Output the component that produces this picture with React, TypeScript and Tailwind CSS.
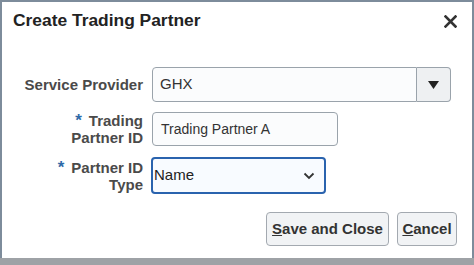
import React from "react";

const font = { fontFamily: '"Liberation Sans", Arial, sans-serif' };

function Label({ lines, required }: { lines: string[]; required?: boolean }) {
  return (
    <div className="w-[141px] shrink-0 text-right text-[15px] font-bold leading-[17px] text-[#4a4a4a]">
      {lines.map((l, i) => (
        <div key={i}>
          {i === 0 && required ? <span className="text-[#2f6aa8] mr-[7px] text-[17px]">*</span> : null}
          {l}
        </div>
      ))}
    </div>
  );
}

export default function App() {
  return (
    <div className="w-[474px] h-[265px] bg-[#9ea2a6] overflow-hidden" style={font}>
      <div className="h-[258px] bg-white border-l-2 border-r-2 border-t-2 border-[#7d8c9b] flex flex-col">
        <div className="flex items-start justify-between pl-[11px] pr-[14px] pt-[8px]">
          <div className="text-[17.4px] font-bold text-[#222] leading-[20px]">Create Trading Partner</div>
          <svg width="13" height="13" viewBox="0 0 13 13" className="mt-[5px] mr-[1px]">
            <path d="M1.5 1.5 L11.5 11.5 M11.5 1.5 L1.5 11.5" stroke="#333" strokeWidth="2.6" strokeLinecap="square" />
          </svg>
        </div>

        <div className="flex flex-col mt-[37px]">
          <div className="flex items-center h-[35px]">
            <Label lines={["Service Provider"]} />
            <div className="ml-[9px] flex h-[35px]">
              <div className="w-[265px] h-full border border-[#9aa3ab] rounded-l-[4px] bg-[#fbfcfd] flex items-center pl-[7px] text-[15px] text-[#333]">
                GHX
              </div>
              <div className="w-[34px] h-full border border-l-0 border-[#9aa3ab] rounded-r-[4px] bg-[#eef0f2] flex items-center justify-center">
                <svg width="11" height="8" viewBox="0 0 11 8">
                  <path d="M0 0 L11 0 L5.5 8 Z" fill="#222" />
                </svg>
              </div>
            </div>
          </div>

          <div className="flex items-center h-[34px] mt-[10px]">
            <Label lines={["Trading", "Partner ID"]} required />
            <div className="ml-[9px] w-[186px] h-[34px] border border-[#9aa3ab] rounded-[4px] bg-[#fbfcfd] flex items-center pl-[8px] text-[14px] text-[#333]">
              Trading Partner A
            </div>
          </div>

          <div className="flex items-center h-[37px] mt-[11px]">
            <Label lines={["Partner ID", "Type"]} required />
            <div className="ml-[8px] w-[175px] h-[37px] border-2 border-[#2a63ae] rounded-[4px] bg-[#f8fbff] flex items-center justify-between pl-[1px] pr-[9px] text-[15px] text-[#222]">
              <span>Name</span>
              <svg width="12" height="8" viewBox="0 0 12 8">
                <path d="M1.5 1.5 L6 6 L10.5 1.5" stroke="#333" strokeWidth="1.8" fill="none" />
              </svg>
            </div>
          </div>
        </div>

        <div className="flex justify-end gap-[8px] pr-[15px] mt-[18px]">
          <button className="w-[123px] h-[34px] border border-[#a3a9b0] rounded-[4px] bg-[#f1f3f5] text-[15px] font-bold text-[#333]">
            <span className="underline">S</span>ave and Close
          </button>
          <button className="w-[60px] h-[34px] border border-[#a3a9b0] rounded-[4px] bg-[#f1f3f5] text-[15px] font-bold text-[#333]">
            <span className="underline">C</span>ancel
          </button>
        </div>
      </div>
    </div>
  );
}
